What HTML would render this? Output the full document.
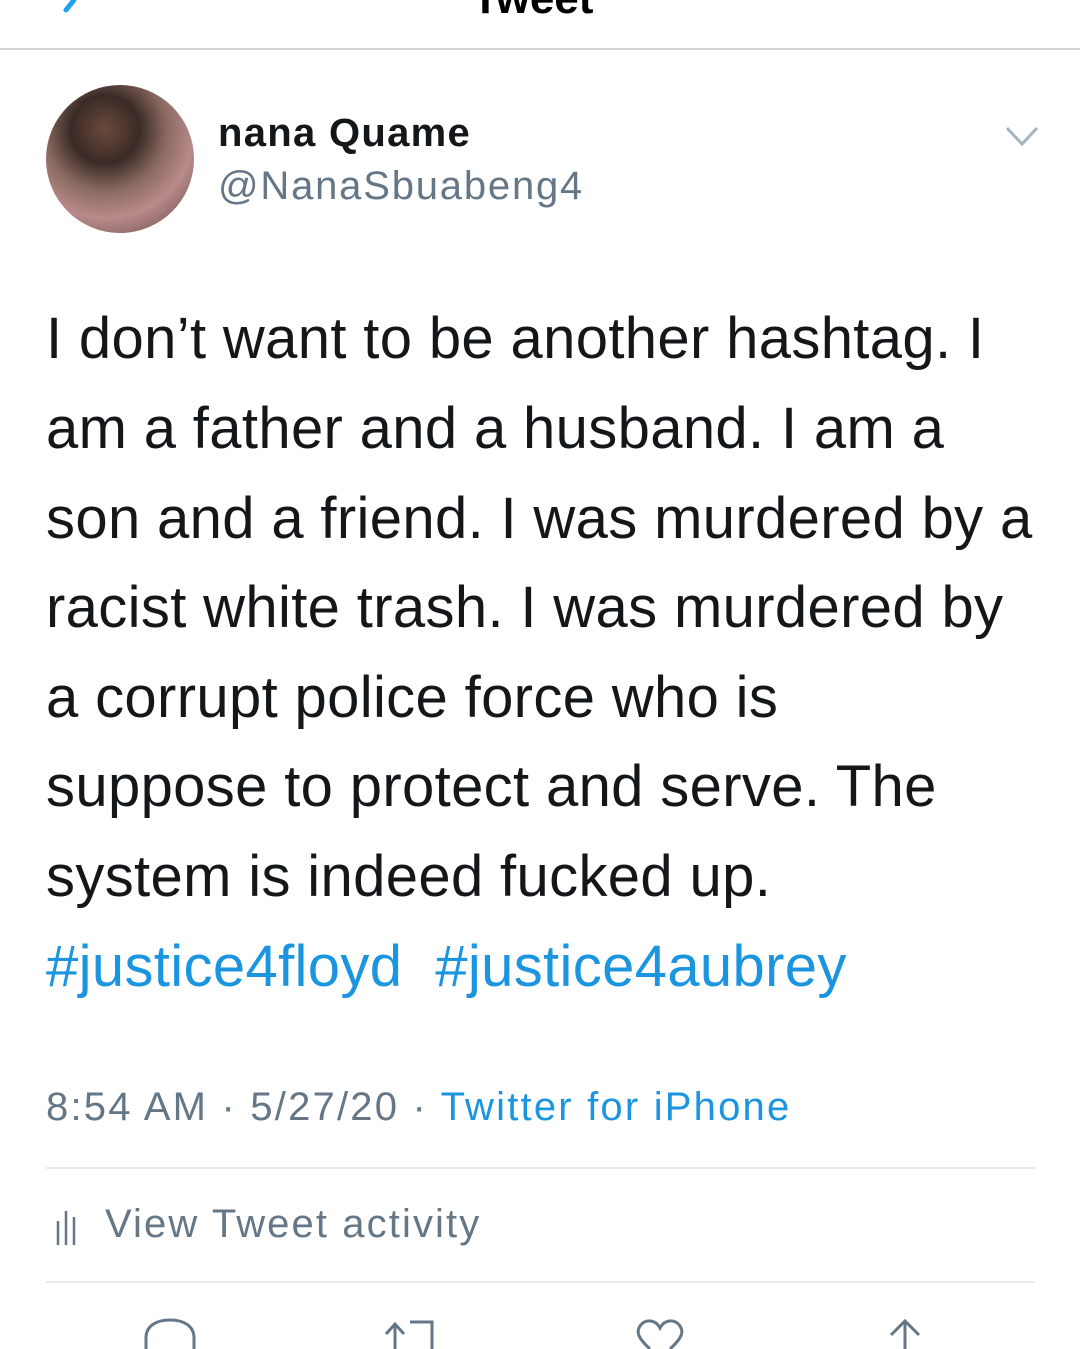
<!DOCTYPE html>
<html><head><meta charset="utf-8"><style>
body{margin:0;width:1080px;height:1349px;background:#fff;overflow:hidden;position:relative;font-family:"Liberation Sans",sans-serif}
.a{position:absolute;white-space:nowrap}
.t{font-size:58px;color:#14171a;letter-spacing:0.35px;left:46px;line-height:1}
.h{color:#1b95e0}
</style></head><body>
<div class="a" style="left:472px;top:-26px;font-size:44px;font-weight:bold;color:#000">Tweet</div>
<svg class="a" style="left:50px;top:0" width="30" height="14"><path d="M24 0 L16 10" stroke="#1da1f2" stroke-width="5" fill="none" stroke-linecap="round"/></svg>
<div class="a" style="left:0;top:48px;width:1080px;height:2px;background:#cfd6dc"></div>
<div class="a" style="left:46px;top:85px;width:148px;height:148px;border-radius:50%;background:radial-gradient(circle at 40% 30%,#6b4a3c 0,#3a2a26 25%,#8a6a60 45%,#b98a8a 65%,#5b4040 100%)"></div>
<div class="a" style="left:218px;top:111px;font-size:40px;font-weight:bold;color:#14171a;letter-spacing:1.3px">nana Quame</div>
<div class="a" style="left:218px;top:164px;font-size:40px;color:#657786;letter-spacing:1.8px">@NanaSbuabeng4</div>
<svg class="a" style="left:1005px;top:125px" width="34" height="22"><path d="M2 3 L17 19 L32 3" stroke="#a8b4bd" stroke-width="3" fill="none"/></svg>
<div class="a t" style="top:310px">I don’t want to be another hashtag. I</div>
<div class="a t" style="top:400px">am a father and a husband. I am a</div>
<div class="a t" style="top:490px">son and a friend. I was murdered by a</div>
<div class="a t" style="top:579px">racist white trash. I was murdered by</div>
<div class="a t" style="top:669px">a corrupt police force who is</div>
<div class="a t" style="top:758px">suppose to protect and serve. The</div>
<div class="a t" style="top:848px">system is indeed fucked up.</div>
<div class="a t h" style="top:938px">#justice4floyd&nbsp; #justice4aubrey</div>
<div class="a" style="left:46px;top:1085px;font-size:40px;color:#657786;letter-spacing:2.2px">8:54 AM · 5/27/20 · <span class="h">Twitter for iPhone</span></div>
<div class="a" style="left:46px;top:1167px;width:989px;height:2px;background:#e6ecf0"></div>
<svg class="a" style="left:55px;top:1203px" width="30" height="44"><path d="M3 18V42M11 8V42M19 14V42" stroke="#657786" stroke-width="2.5"/></svg>
<div class="a" style="left:105px;top:1202px;font-size:40px;color:#657786;letter-spacing:2.1px">View Tweet activity</div>
<div class="a" style="left:46px;top:1281px;width:989px;height:2px;background:#e6ecf0"></div>
<svg class="a" style="left:0;top:1310px" width="1080" height="39" fill="none" stroke="#657786" stroke-width="3">
<path d="M146 39V28C146 16 156 10 170 10C184 10 194 16 194 28V39"/>
<path d="M395 39V14M386 24L395 14L404 24M410 12H432V39"/>
<path d="M650 39C638 28 636 22 640 16C646 8 656 10 660 18C664 10 674 8 680 16C684 22 682 28 670 39"/>
<path d="M905 39V12M891 25L905 11L919 25"/>
</svg>
</body></html>
